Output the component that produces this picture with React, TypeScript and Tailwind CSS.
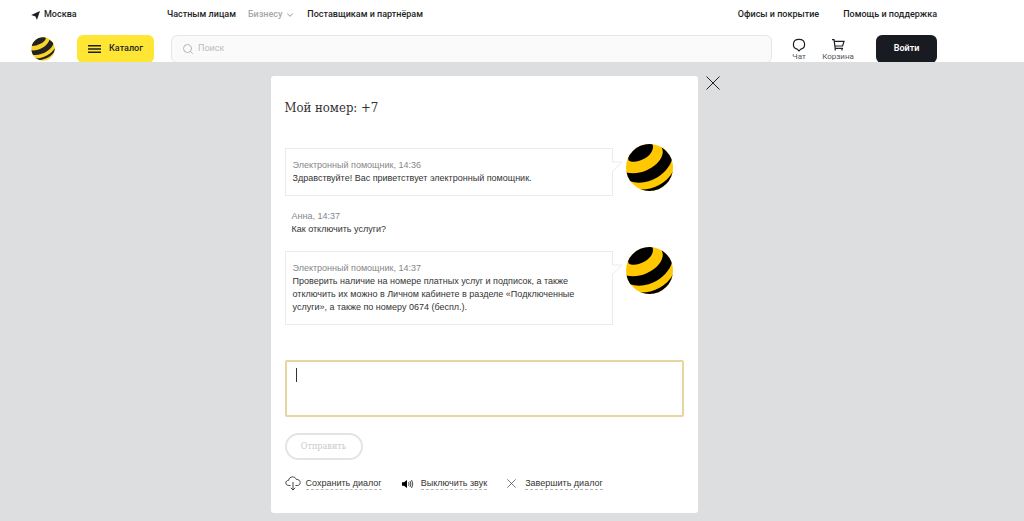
import { useState } from "react";
import { Search, ChevronDown } from "lucide-react";

const messages = [
  { bot: true, author: "Электронный помощник", time: "14:36", text: "Здравствуйте! Вас приветствует электронный помощник." },
  { bot: false, author: "Анна", time: "14:37", text: "Как отключить услуги?" },
  {
    bot: true,
    author: "Электронный помощник",
    time: "14:37",
    text: "Проверить наличие на номере платных услуг и подписок, а также отключить их можно в Личном кабинете в разделе «Подключенные услуги», а также по номеру 0674 (беспл.).",
  },
];

function Ball({ id, className }: { id: string; className: string }) {
  return (
    <svg viewBox="0 0 140 140" className={className} aria-hidden="true">
      <clipPath id={id}>
        <circle cx="70" cy="70" r="70" />
      </clipPath>
      <g clipPath={`url(#${id})`}>
        <rect width="140" height="140" fill="#ffc800" />
        <path d="M8 49C0 30 24 -6 60 -6L79 1C84 16 74 32 58 42C40 53 18 56 8 49Z" />
        <path d="M-4 84C16 89 40 88 60 79C84 69 102 52 107 36C111 26 110 18 106 10L142 24C140 54 122 82 94 99C66 116 32 121 4 107Z" />
        <path d="M34 135C76 139 120 120 142 78V142H34Z" />
      </g>
    </svg>
  );
}

function Logo() {
  return (
    <svg viewBox="0 0 70 70" className="size-6" aria-hidden="true">
      <clipPath id="logo">
        <circle cx="35" cy="35" r="34" />
      </clipPath>
      <g clipPath="url(#logo)">
        <rect width="70" height="70" fill="#f9d22c" />
        <path d="M0 26C4 8 22 -2 42 0C46 6 38 14 29 19C18 25 6 27 0 26Z" fill="#222" />
        <path d="M0 39C20 42 48 28 54 8L66 17C62 36 34 56 4 52Z" fill="#222" />
        <path d="M12 62C34 64 60 50 70 32V40C60 56 44 65 24 67Z" fill="#222" />
      </g>
    </svg>
  );
}

function Cross({ className }: { className: string }) {
  return (
    <svg viewBox="0 0 14 14" className={className} fill="none" stroke="currentColor" aria-hidden="true">
      <path d="M.5 .5l13 13M13.5 .5l-13 13" />
    </svg>
  );
}

function Header() {
  return (
    <header className="h-[62px] overflow-hidden bg-white font-['Roboto','Inter',sans-serif] text-[#1d1f24]">
      <div className="mr-14 px-[31px]">
        <nav className="flex h-[30px] items-center text-[9px] font-medium whitespace-nowrap">
          <a href="#city" className="flex w-[136px] items-center gap-1">
            <svg viewBox="0 0 10 10" className="size-[9px]" aria-hidden="true">
              <path d="M10 0L6.6 10L5 6.2L.2 4.4Z" fill="currentColor" />
            </svg>
            Москва
          </a>
          <div className="flex gap-3">
            <a href="#private">Частным лицам</a>
            <a href="#business" className="flex items-center gap-[3px] text-[#a6a7aa]">
              Бизнесу
              <ChevronDown className="size-[10px]" strokeWidth={2.5} />
            </a>
            <a href="#partners">Поставщикам и партнёрам</a>
          </div>
          <div className="ml-auto flex gap-6">
            <a href="#offices">Офисы и покрытие</a>
            <a href="#help">Помощь и поддержка</a>
          </div>
        </nav>

        <div className="mt-[5px] flex items-center">
          <a href="#home" aria-label="Главная">
            <Logo />
          </a>
          <button className="ml-[22px] flex h-7 w-[77px] items-center justify-center gap-2 rounded-md bg-[#ffe634] text-[9px] font-medium">
            <svg viewBox="0 0 13 8" className="h-2 w-[13px]" aria-hidden="true">
              <path d="M0 .75h13M0 4h13M0 7.25h13" stroke="currentColor" strokeWidth="1.5" />
            </svg>
            Каталог
          </button>
          <label className="ml-[17px] flex h-7 flex-1 items-center gap-1 rounded-md border border-[#e6e6e8] bg-[#fafafb] px-2.5 text-[#b4b5b9]">
            <Search className="size-3" strokeWidth={2} />
            <input
              type="search"
              aria-label="Поиск"
              placeholder="Поиск"
              className="min-w-0 flex-1 bg-transparent text-[9px] outline-none placeholder:text-[#b9babe]"
            />
          </label>
          <a href="#chat" className="ml-4 flex w-[22px] flex-col items-center text-[8px] leading-[9px] text-[#55575c]">
            <svg viewBox="0 0 14 14" className="size-[14px] text-[#1d1f24]" fill="none" stroke="currentColor" strokeWidth="1.2" aria-hidden="true">
              <path d="M5.2 11.2C2.8 10.5 1.4 8.8 1.4 6.4C1.4 3.4 3.6 1.4 7 1.4S12.6 3.4 12.6 6.4C12.6 8.8 11.2 10.5 8.8 11.2L7 13Z" />
            </svg>
            Чат
          </a>
          <a href="#cart" className="ml-2.5 flex w-9 flex-col items-center text-[8px] leading-[9px] text-[#55575c]">
            <svg viewBox="0 0 14 14" className="size-[14px] text-[#1d1f24]" fill="none" stroke="currentColor" strokeWidth="1.2" aria-hidden="true">
              <path d="M1 1.6H3L4.2 10.4H12M3.3 3.4H13L11.6 8H4M4.2 10.4V12.6M11 10.4V12.6" />
            </svg>
            Корзина
          </a>
          <button className="ml-5 h-7 w-[61px] rounded-md bg-[#191b22] text-[9px] font-semibold text-white">Войти</button>
        </div>
      </div>
    </header>
  );
}

function Message({ bot, author, time, text, id }: (typeof messages)[number] & { id: string }) {
  const body = (
    <>
      <p className="text-[#85878a]">
        {author}, {time}
      </p>
      <p>{text}</p>
    </>
  );

  if (!bot) return <li className="px-[7px] pt-3.5 pb-[11px]">{body}</li>;

  return (
    <li className="flex items-start gap-[13px]">
      <div className="relative mt-1 flex-1 border border-[#ebebec] px-[7px] py-[10px]">
        {body}
        {/* bubble tail */}
        <svg viewBox="0 0 11 12" className="absolute top-3 left-full h-3 w-[11px]" aria-hidden="true">
          <path d="M0 1H10L0 11" fill="#fff" stroke="#ebebec" />
        </svg>
      </div>
      <Ball id={id} className="mr-[11px] size-[47px] shrink-0" />
    </li>
  );
}

function Action({ icon, children }: { icon: React.ReactNode; children: string }) {
  return (
    <button className="flex items-center gap-[5px]">
      {icon}
      <span className="border-b border-dashed border-[#b5b5b5] leading-[11px]">{children}</span>
    </button>
  );
}

export default function App() {
  const [draft, setDraft] = useState("");

  return (
    <div className="flex min-h-screen flex-col bg-[#dddee0]">
      <Header />
      <main className="mr-14 pt-3.5 pb-2 font-['Liberation_Sans',Arial,sans-serif] text-[9px] leading-[13px] text-[#333]">
        <section
          role="dialog"
          aria-labelledby="chat-title"
          className="relative mx-auto w-full max-w-[427px] rounded-[3px] bg-white px-3.5 pt-5 pb-[22px]"
        >
          <button aria-label="Закрыть" className="absolute top-0 left-full ml-2 text-[#222]">
            <Cross className="size-[14px]" />
          </button>

          <h1 id="chat-title" className="font-['DejaVu_Serif_Condensed','Liberation_Serif',serif] text-[13px] leading-6">
            Мой номер: +7
          </h1>

          <ul className="mt-6">
            {messages.map((message, i) => (
              <Message key={i} id={`ball-${i}`} {...message} />
            ))}
          </ul>

          <form className="mt-[35px]" onSubmit={(e) => e.preventDefault()}>
            <div className="relative">
              <textarea
                aria-label="Сообщение"
                value={draft}
                onChange={(e) => setDraft(e.target.value)}
                className="peer block h-[57px] w-full resize-none rounded-xs border-2 border-[#e6d5a0] px-2.5 py-2 outline-none"
              />
              {draft === "" && <span className="absolute top-2 left-[11px] h-3.5 w-px bg-[#333] peer-focus:hidden" />}
            </div>
            <button
              disabled={draft === ""}
              className="mt-4 h-[27px] w-[78px] rounded-full border-2 border-[#e4e4e4] font-['DejaVu_Serif_Condensed','Liberation_Serif',serif] text-[9px] text-[#c9c9c9]"
            >
              Отправить
            </button>
          </form>

          <div className="mt-4 flex items-center gap-5">
            <Action
              icon={
                <svg viewBox="0 0 16 15" className="h-[15px] w-4" fill="none" stroke="currentColor" strokeWidth=".9" aria-hidden="true">
                  <path d="M5.5 9.5H3.8C2 9.5 .8 8.4 .8 6.9S2 4.3 3.6 4.4C3.9 2.3 5.4 .9 7.5 .9C9.3 .9 10.7 1.8 11.3 3.4C13.4 3.2 15.2 4.6 15.2 6.6C15.2 8.4 13.9 9.5 12.2 9.5H10.5M8 6V14M5.8 11.8L8 14L10.2 11.8" />
                </svg>
              }
            >
              Сохранить диалог
            </Action>
            <Action
              icon={
                <svg viewBox="0 0 14 10" className="h-[10px] w-[14px]" fill="none" stroke="currentColor" aria-hidden="true">
                  <path d="M0 3.2H2L5 .9V9.1L2 6.8H0Z" fill="#000" stroke="none" />
                  <path d="M6.5 3.2Q7.6 5 6.5 6.8M8 2Q9.8 5 8 8M9.6 1Q12 5 9.6 9" strokeWidth=".9" />
                </svg>
              }
            >
              Выключить звук
            </Action>
            <Action
              icon={
                <span className="w-[13px]">
                  <Cross className="size-[9px]" />
                </span>
              }
            >
              Завершить диалог
            </Action>
          </div>
        </section>
      </main>
    </div>
  );
}
